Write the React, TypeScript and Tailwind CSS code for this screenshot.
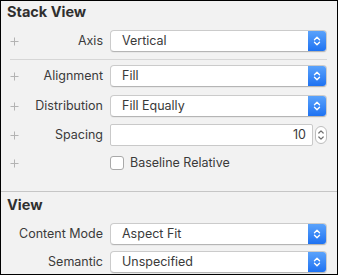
import React from "react";

const font = { fontFamily: "Inter, 'Liberation Sans', sans-serif" };

function Plus() {
  return (
    <svg width="9" height="9" viewBox="0 0 9 9" className="shrink-0">
      <path d="M4.5 0.5V8.5M0.5 4.5H8.5" stroke="#b3b3b3" strokeWidth="1" />
    </svg>
  );
}

function BlueChevrons() {
  return (
    <svg width="8" height="12" viewBox="0 0 8 12">
      <path d="M1.5 4.8L4 2.3L6.5 4.8" stroke="white" strokeWidth="1.4" fill="none" strokeLinecap="round" strokeLinejoin="round" />
      <path d="M1.5 7.2L4 9.7L6.5 7.2" stroke="white" strokeWidth="1.4" fill="none" strokeLinecap="round" strokeLinejoin="round" />
    </svg>
  );
}

function Popup({ value }: { value: string }) {
  return (
    <div className="flex-1 h-[22px] flex rounded-[4px] bg-white border border-[#cbcbcb] border-b-[#b5b5b5] shadow-[0_1px_0_rgba(0,0,0,0.04)] overflow-hidden">
      <div className="flex-1 flex items-center pl-[11px] text-[12.5px] text-[#3a3a3a]">{value}</div>
      <div className="w-[18px] h-full flex items-center justify-center bg-gradient-to-b from-[#5aa2fb] to-[#1d72f2]">
        <BlueChevrons />
      </div>
    </div>
  );
}

function Row({ plus, label, children, h = 24 }: { plus?: boolean; label?: string; children: React.ReactNode; h?: number }) {
  return (
    <div className="flex items-center" style={{ height: h }}>
      <div className="w-[102px] flex items-center pl-[9px] pr-0">
        <div className="w-[9px]">{plus ? <Plus /> : null}</div>
        <div className="flex-1 text-right text-[12.5px] text-[#3b3b3b] whitespace-nowrap">{label}</div>
      </div>
      <div className="flex-1 flex items-center pl-[7px] pr-[10px]">{children}</div>
    </div>
  );
}

export default function App() {
  return (
    <div style={font} className="w-[338px] h-[275px] border border-black bg-[#f2f2f2] overflow-hidden flex flex-col">
      <div className="h-[28px] pl-[6px] pt-[2px] text-[14.5px] leading-[17px] font-bold text-[#2f2f2f]">Stack View</div>
      <Row plus label="Axis">
        <Popup value="Vertical" />
      </Row>
      <div className="h-[6px]" />
      <div className="ml-[9px] mr-[10px] h-px bg-[#d6d6d6]" />
      <div className="h-[4px]" />
      <Row plus label="Alignment">
        <Popup value="Fill" />
      </Row>
      <div className="h-[6px]" />
      <Row plus label="Distribution">
        <Popup value="Fill Equally" />
      </Row>
      <div className="h-[5px]" />
      <Row plus label="Spacing">
        <div className="flex-1 h-[22px] bg-white border border-[#c9c9c9] rounded-[2px] flex items-center justify-end pr-[6px] text-[12.5px] text-[#3a3a3a]">10</div>
        <div className="ml-[2px] w-[12px] h-[18px] rounded-[6px] bg-white border border-[#bdbdbd] flex items-center justify-center">
          <svg width="8" height="14" viewBox="0 0 8 14">
            <path d="M1.8 5L4 2.8L6.2 5" stroke="#6e6e6e" strokeWidth="1.2" fill="none" strokeLinecap="round" strokeLinejoin="round" />
            <path d="M1.8 9L4 11.2L6.2 9" stroke="#6e6e6e" strokeWidth="1.2" fill="none" strokeLinecap="round" strokeLinejoin="round" />
          </svg>
        </div>
      </Row>
      <div className="h-[4px]" />
      <Row plus label="">
        <div className="w-[14px] h-[14px] bg-white border border-[#a9a9a9] rounded-[3px]" />
        <span className="ml-[6px] text-[12.5px] text-[#3a3a3a]">Baseline Relative</span>
      </Row>
      <div className="h-[16px]" />
      <div className="h-px bg-[#c6c6c6]" />
      <div className="h-[30px] pl-[6px] pt-[4px] text-[14.5px] leading-[17px] font-bold text-[#2f2f2f]">View</div>
      <Row label="Content Mode">
        <Popup value="Aspect Fit" />
      </Row>
      <div className="h-[4px]" />
      <Row label="Semantic">
        <Popup value="Unspecified" />
      </Row>
    </div>
  );
}
